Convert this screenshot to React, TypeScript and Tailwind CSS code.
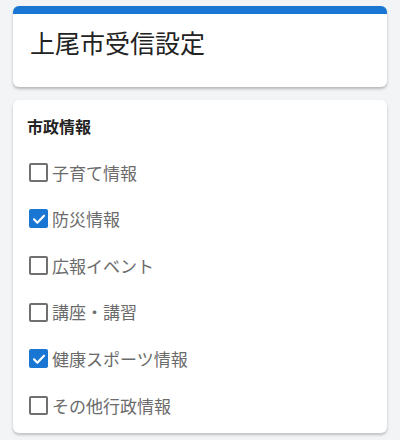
const items = [
  { label: "子育て情報", checked: false },
  { label: "防災情報", checked: true },
  { label: "広報イベント", checked: false },
  { label: "講座・講習", checked: false },
  { label: "健康スポーツ情報", checked: true },
  { label: "その他行政情報", checked: false },
];

const CheckBox = ({ checked }: { checked: boolean }) => {
  if (checked) {
    return (
      <span className="flex w-[19px] h-[19px] rounded-[2px] bg-[#1976d2] items-center justify-center">
        <svg width="16" height="16" viewBox="0 0 24 24" fill="none">
          <path d="M4.5 12.5l5 5 10-10.5" stroke="white" strokeWidth="3.2" strokeLinecap="round" strokeLinejoin="round" />
        </svg>
      </span>
    );
  }
  return <span className="block w-[19px] h-[19px] rounded-[2px] border-2 border-[#707070] bg-white" />;
};

export default function App() {
  return (
    <div
      className="w-[400px] h-[440px] bg-[#f3f4f6] px-[13px] pt-[6px] flex flex-col gap-[13px]"
      style={{ fontFamily: '"Noto Sans CJK JP", "Noto Sans", sans-serif' }}
    >
      <div className="bg-white rounded-md overflow-hidden shadow-[0_2px_3px_rgba(0,0,0,0.25)]">
        <div className="h-[8px] bg-[#1976d2]" />
        <div className="px-[17px] pt-[12px] pb-[29px] text-[25px] leading-[32px] text-[#222]">上尾市受信設定</div>
      </div>

      <div className="bg-white rounded-md shadow-[0_2px_3px_rgba(0,0,0,0.22)] px-[14px] pt-[14px] pb-[4px]">
        <div className="text-[16px] leading-[24px] font-bold text-[#222] mb-[11px]">市政情報</div>
        <div className="flex flex-col">
          {items.map((it) => (
            <div key={it.label} className="h-[46.6px] flex items-center gap-[4px] pl-[2px]">
              <CheckBox checked={it.checked} />
              <span className="text-[17px] text-[#6b6b6b]">{it.label}</span>
            </div>
          ))}
        </div>
      </div>
    </div>
  );
}
